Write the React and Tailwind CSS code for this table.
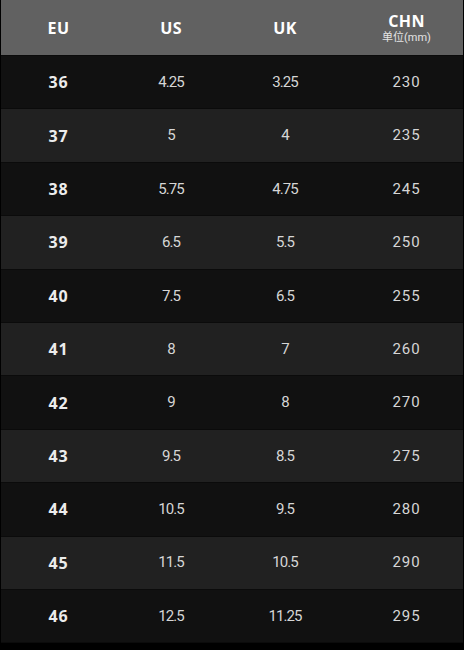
import React from 'react'

const rows = [
  ['36', '4.25', '3.25', '230'],
  ['37', '5', '4', '235'],
  ['38', '5.75', '4.75', '245'],
  ['39', '6.5', '5.5', '250'],
  ['40', '7.5', '6.5', '255'],
  ['41', '8', '7', '260'],
  ['42', '9', '8', '270'],
  ['43', '9.5', '8.5', '275'],
  ['44', '10.5', '9.5', '280'],
  ['45', '11.5', '10.5', '290'],
  ['46', '12.5', '11.25', '295'],
]

const cols = 'grid grid-cols-[115px_110px_118px_119px]'

const App = () => {
  return (
    <div className="h-[650px] w-[464px] bg-black px-px font-['Roboto',sans-serif]">
      <div
        className={`${cols} h-[56px] items-center border-b border-[#0b0b0b] bg-[#616161] text-[16px] font-bold tracking-wide text-white font-['Open_Sans',sans-serif]`}
      >
        <span className="text-center">EU</span>
        <span className="text-center">US</span>
        <span className="text-center">UK</span>
        <span className="flex flex-col items-center pl-[6px] leading-none">
          <span>CHN</span>
          <span className="mt-[3px] text-[11px] font-normal tracking-normal text-[#e4e4e4] font-['Roboto','Noto_Sans_CJK_SC',sans-serif]">
            单位(mm)
          </span>
        </span>
      </div>
      {rows.map((row, i) => (
        <div
          key={row[0]}
          className={`${cols} h-[53.4px] items-center border-b border-[#0b0b0b] ${
            i % 2 === 0 ? 'bg-[#111111]' : 'bg-[#212121]'
          }`}
        >
          <span className="text-center text-[16px] font-bold tracking-[0.06em] text-[#ececec] font-['Open_Sans',sans-serif]">
            {row[0]}
          </span>
          <span className="text-center text-[15px] tracking-[-0.06em] text-[#d6d6d6]">{row[1]}</span>
          <span className="text-center text-[15px] tracking-[-0.06em] text-[#d6d6d6]">{row[2]}</span>
          <span className="pl-[6px] text-center text-[15px] tracking-[0.06em] text-[#d6d6d6]">{row[3]}</span>
        </div>
      ))}
    </div>
  )
}

export default App
